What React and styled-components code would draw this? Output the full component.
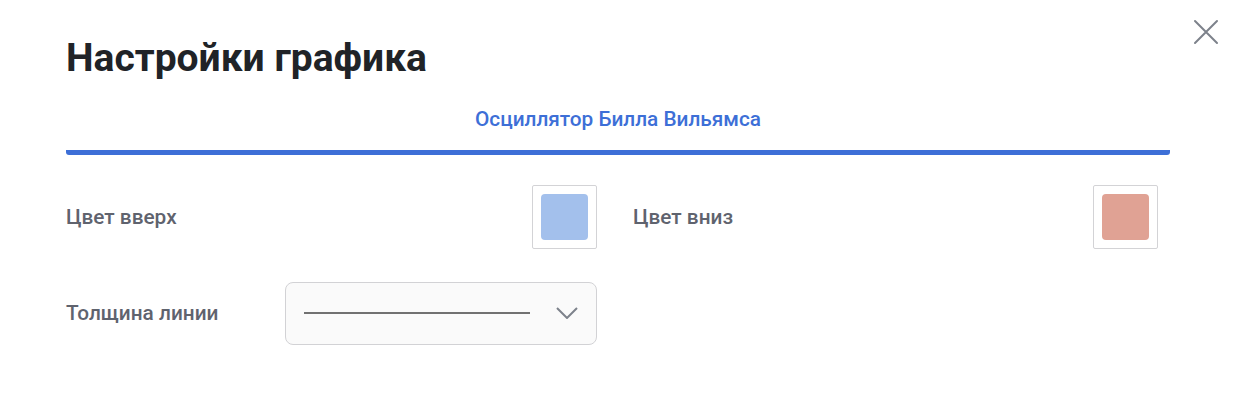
import React from 'react'
import styled, { createGlobalStyle } from 'styled-components'

const GlobalStyle = createGlobalStyle`
  body {
    margin: 0;
    background: #fff;
    font-family: Roboto, "Noto Sans", Arial, sans-serif;
  }
`

const Modal = styled.div`
  position: relative;
  width: 1240px;
  height: 414px;
  box-sizing: border-box;
  padding: 34px 70px 0 66px;
  background: #fff;
`

const CloseButton = styled.button`
  position: absolute;
  top: 18px;
  right: 20px;
  width: 28px;
  height: 28px;
  padding: 0;
  border: none;
  background: transparent;
  cursor: pointer;
`

const Title = styled.h1`
  margin: 0;
  font-size: 39px;
  line-height: 48px;
  font-weight: 700;
  color: #202327;
`

const Tabs = styled.div`
  display: flex;
  margin-top: 20px;
`

const Tab = styled.div`
  flex: 1;
  text-align: center;
  font-size: 20.8px;
  line-height: 24px;
  font-weight: 500;
  color: ${p => (p.active ? '#3d6fd7' : '#6b7079')};
  padding: 5px 0 19px;
  border-bottom: 5px solid ${p => (p.active ? '#3d6fd7' : 'transparent')};
  border-radius: 3px;
`

const Fields = styled.div`
  display: grid;
  grid-template-columns: 531px 525px;
  column-gap: 36px;
  row-gap: 32px;
  margin-top: 30px;
`

const Field = styled.div`
  display: flex;
  align-items: center;
  justify-content: ${p => (p.spread ? 'space-between' : 'flex-start')};
  min-height: 64px;
`

const Label = styled.span`
  font-size: 20.8px;
  font-weight: 500;
  color: #5f636e;
  width: ${p => p.width || 'auto'};
`

const Swatch = styled.div`
  width: 65px;
  height: 64px;
  box-sizing: border-box;
  padding: 8px;
  border: 1px solid #d3d3d6;
  border-radius: 2px;
  background: #fff;
`

const SwatchColor = styled.div`
  width: 100%;
  height: 100%;
  border-radius: 4px;
  background: ${p => p.color};
`

const Select = styled.div`
  display: flex;
  align-items: center;
  width: 312px;
  height: 63px;
  box-sizing: border-box;
  padding: 0 18px 0 18px;
  border: 1px solid #d2d2d5;
  border-radius: 8px;
  background: #fafafa;
`

const LinePreview = styled.div`
  width: 226px;
  height: 2px;
  background: #717171;
`

const Chevron = styled.svg`
  margin-left: auto;
`

export default function App() {
  return (
    <>
      <GlobalStyle />
      <Modal>
        <CloseButton aria-label="Закрыть">
          <svg width="28" height="28" viewBox="0 0 28 28">
            <path d="M3 3L25 25M25 3L3 25" stroke="#7d828b" strokeWidth="2" strokeLinecap="round" />
          </svg>
        </CloseButton>
        <Title>Настройки графика</Title>
        <Tabs>
          <Tab active>Осциллятор Билла Вильямса</Tab>
        </Tabs>
        <Fields>
          <Field spread>
            <Label>Цвет вверх</Label>
            <Swatch>
              <SwatchColor color="#a3c0ec" />
            </Swatch>
          </Field>
          <Field spread>
            <Label>Цвет вниз</Label>
            <Swatch>
              <SwatchColor color="#e0a294" />
            </Swatch>
          </Field>
          <Field>
            <Label width="219px">Толщина линии</Label>
            <Select>
              <LinePreview />
              <Chevron width="22" height="12" viewBox="0 0 22 12">
                <path d="M1 1L11 11L21 1" fill="none" stroke="#7d828b" strokeWidth="2" />
              </Chevron>
            </Select>
          </Field>
        </Fields>
      </Modal>
    </>
  )
}
